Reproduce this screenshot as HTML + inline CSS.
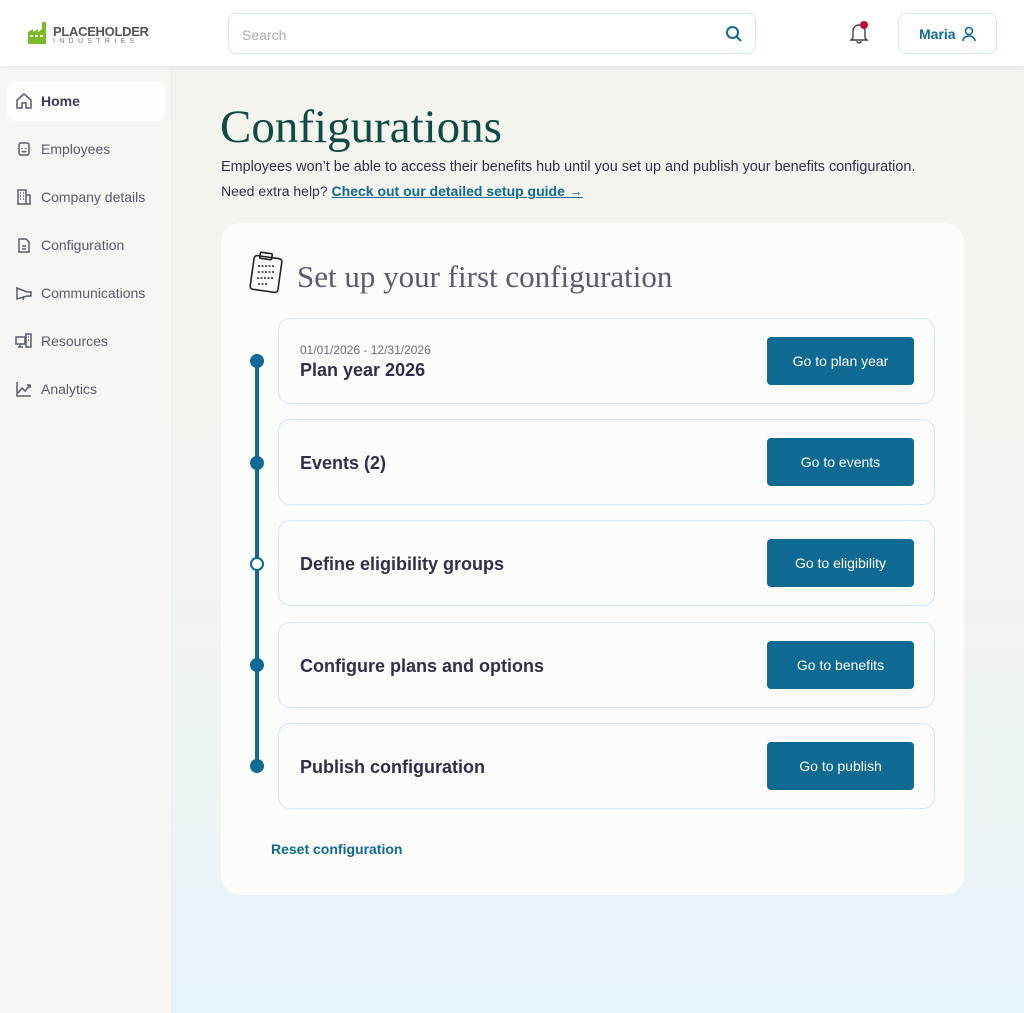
<!DOCTYPE html>
<html><head><meta charset="utf-8"><style>
*{box-sizing:border-box;margin:0;padding:0}
body{width:1024px;height:1013px;font-family:"Liberation Sans",sans-serif;background:linear-gradient(#f5f4ef 0%,#f3f4ef 50%,#e6f3f9 100%);position:relative;overflow:hidden;color:#2e2f4a}
.hdr{position:absolute;left:0;top:0;width:1024px;height:66px;background:#fff;box-shadow:0 2px 6px rgba(0,0,0,.06);z-index:2}
.side{position:absolute;left:0;top:66px;width:172px;height:947px;background:#f7f6f3;border-right:1px solid #ecebe6}
.nav{position:absolute;left:7px;width:158px;height:40px;display:flex;align-items:center;padding-left:8px;font-size:14px;color:#585a70}
.nav svg{width:18px;height:18px;margin-right:8px;fill:none;stroke:#5a5c72;stroke-width:1.5}
.nav.act{background:#fdfdfc;border-radius:8px;font-weight:bold;color:#3a3c55}
.search{position:absolute;left:228px;top:13px;width:528px;height:41px;border:1px solid #cfe6f3;border-radius:8px;font-size:14px;color:#a8aab4;padding:13px 0 0 13px}
.card{position:absolute;left:221px;top:223px;width:743px;height:672px;background:#fcfcfa;border-radius:20px}
.row{position:absolute;left:57px;width:657px;height:86px;border:1px solid #cfe6f3;border-radius:12px;background:#fcfcfa}
.row .t{position:absolute;left:21px;top:33px;font-size:18px;font-weight:bold;color:#2e2f4a}
.btn{position:absolute;left:488px;top:18px;width:147px;height:48px;background:#0e6a92;border-radius:4px;color:#fff;font-size:14px;display:flex;align-items:center;justify-content:center}
.dot{position:absolute;left:29px;width:14px;height:14px;border-radius:50%;background:#0e6a92}
</style></head><body>
<div class="hdr">
 <div style="position:absolute;left:28px;top:22px;width:20px;height:22px">
  <svg width="22" height="22" viewBox="0 0 22 22"><path d="M0 10 L5 7 V10 L10 7 V10 L14 7 V0 H18 V22 H0Z" fill="#7ab929"/><g fill="#e6f4d0"><rect x="2" y="13" width="3" height="2"/><rect x="7" y="13" width="3" height="2"/><rect x="12" y="13" width="3" height="2"/></g></svg>
 </div>
 <div style="position:absolute;left:53px;top:24px;font-size:13px;font-weight:bold;color:#555;letter-spacing:-.3px">PLACEHOLDER</div>
 <div style="position:absolute;left:53px;top:38px;font-size:7px;color:#777;letter-spacing:4.3px">INDUSTRIES</div>
 <div class="search">Search
  <svg style="position:absolute;right:12px;top:11px" width="18" height="18" viewBox="0 0 18 18" fill="none" stroke="#0e6a92" stroke-width="2"><circle cx="7.5" cy="7.5" r="5.5"/><path d="M11.5 11.5 L16 16"/></svg>
 </div>
 <svg style="position:absolute;left:849px;top:22px" width="20" height="22" viewBox="0 0 20 22" fill="none" stroke="#444" stroke-width="1.4"><path d="M4 16 V9 a6 6 0 0 1 12 0 V16 L18 18 H2 Z"/><path d="M8 19 a2 2 0 0 0 4 0"/></svg>
 <div style="position:absolute;left:860px;top:21px;width:8px;height:8px;border-radius:50%;background:#c0082f"></div>
 <div style="position:absolute;left:898px;top:13px;width:99px;height:41px;border:1px solid #cfe6f3;border-radius:8px;color:#0e6a92;font-size:14px;font-weight:bold;padding:12px 0 0 20px">Maria
  <svg style="position:absolute;left:62px;top:12px" width="16" height="16" viewBox="0 0 16 16" fill="none" stroke="#0e6a92" stroke-width="1.6"><circle cx="8" cy="5" r="3.5"/><path d="M2 15 a6 5 0 0 1 12 0"/></svg>
 </div>
</div>
<div class="side">
 <div class="nav act" style="top:15px"><svg viewBox="0 0 18 18"><path d="M2 8 L9 2 L16 8 V16 H11 V11 H7 V16 H2Z"/></svg>Home</div>
 <div class="nav" style="top:63px"><svg viewBox="0 0 18 18"><rect x="4" y="3" width="10" height="12" rx="2"/><path d="M7 8v1M11 8v1M7 11 q2 2 4 0"/></svg>Employees</div>
 <div class="nav" style="top:111px"><svg viewBox="0 0 18 18"><path d="M2 16H16M3 16V2H11V16M11 7H15V16M5 5h1M8 5h1M5 8h1M8 8h1M5 11h1M8 11h1"/></svg>Company details</div>
 <div class="nav" style="top:159px"><svg viewBox="0 0 18 18"><path d="M4 3H11L14 6V16H4Z M7 10h4M7 13h4"/></svg>Configuration</div>
 <div class="nav" style="top:207px"><svg viewBox="0 0 18 18"><path d="M2 4 L12 8 H16 V12 H12 L2 15Z M9 12 L8 16"/></svg>Communications</div>
 <div class="nav" style="top:255px"><svg viewBox="0 0 18 18"><path d="M1 5H10V12H1Z M5 12V15M3 15H8 M11 2H16V15H11Z M13 5h1M13 8h1"/></svg>Resources</div>
 <div class="nav" style="top:303px"><svg viewBox="0 0 18 18"><path d="M2 2V16H16 M3 13 L7 8 L10 11 L15 5 M12 5H15V8"/></svg>Analytics</div>
</div>
<div style="position:absolute;left:220px;top:100px;font-family:'Liberation Serif',serif;font-size:47px;color:#0f4a45">Configurations</div>
<div style="position:absolute;left:221px;top:159px;font-size:14.4px;color:#2e2f4a">Employees won’t be able to access their benefits hub until you set up and publish your benefits configuration.</div>
<div style="position:absolute;left:221px;top:183px;font-size:14px;color:#2e2f4a">Need extra help? <span style="color:#0e6a92;font-weight:bold;text-decoration:underline">Check out our detailed setup guide →</span></div>
<div class="card">
 <svg style="position:absolute;left:27px;top:28px" width="38" height="44" viewBox="0 0 38 44" fill="none" stroke="#222" stroke-width="1.6"><rect x="4" y="6" width="28" height="34" rx="3" transform="rotate(8 18 23)"/><rect x="12" y="2" width="12" height="6" rx="1" transform="rotate(8 18 5)"/><path d="M10 15h16M10 21h16M9 27h16M10 33h10" stroke-dasharray="2 1.5"/></svg>
 <div style="position:absolute;left:76px;top:36px;font-family:'Liberation Serif',serif;font-size:31px;color:#585a70">Set up your first configuration</div>
 <div style="position:absolute;left:34px;top:137px;width:4px;height:406px;background:#0e6a92"></div>
 <div class="dot" style="top:131px"></div>
 <div class="dot" style="top:233px"></div>
 <div class="dot" style="top:334px;background:#fff;border:2px solid #0e6a92"></div>
 <div class="dot" style="top:435px"></div>
 <div class="dot" style="top:536px"></div>
 <div class="row" style="top:95px"><div style="position:absolute;left:21px;top:24px;font-size:12px;color:#6a6c80">01/01/2026 - 12/31/2026</div><div class="t" style="top:41px">Plan year 2026</div><div class="btn">Go to plan year</div></div>
 <div class="row" style="top:196px"><div class="t">Events (2)</div><div class="btn">Go to events</div></div>
 <div class="row" style="top:297px"><div class="t">Define eligibility groups</div><div class="btn">Go to eligibility</div></div>
 <div class="row" style="top:399px"><div class="t">Configure plans and options</div><div class="btn">Go to benefits</div></div>
 <div class="row" style="top:500px"><div class="t">Publish configuration</div><div class="btn">Go to publish</div></div>
 <div style="position:absolute;left:50px;top:618px;font-size:14px;font-weight:bold;color:#0e6a92">Reset configuration</div>
</div>
</body></html>
